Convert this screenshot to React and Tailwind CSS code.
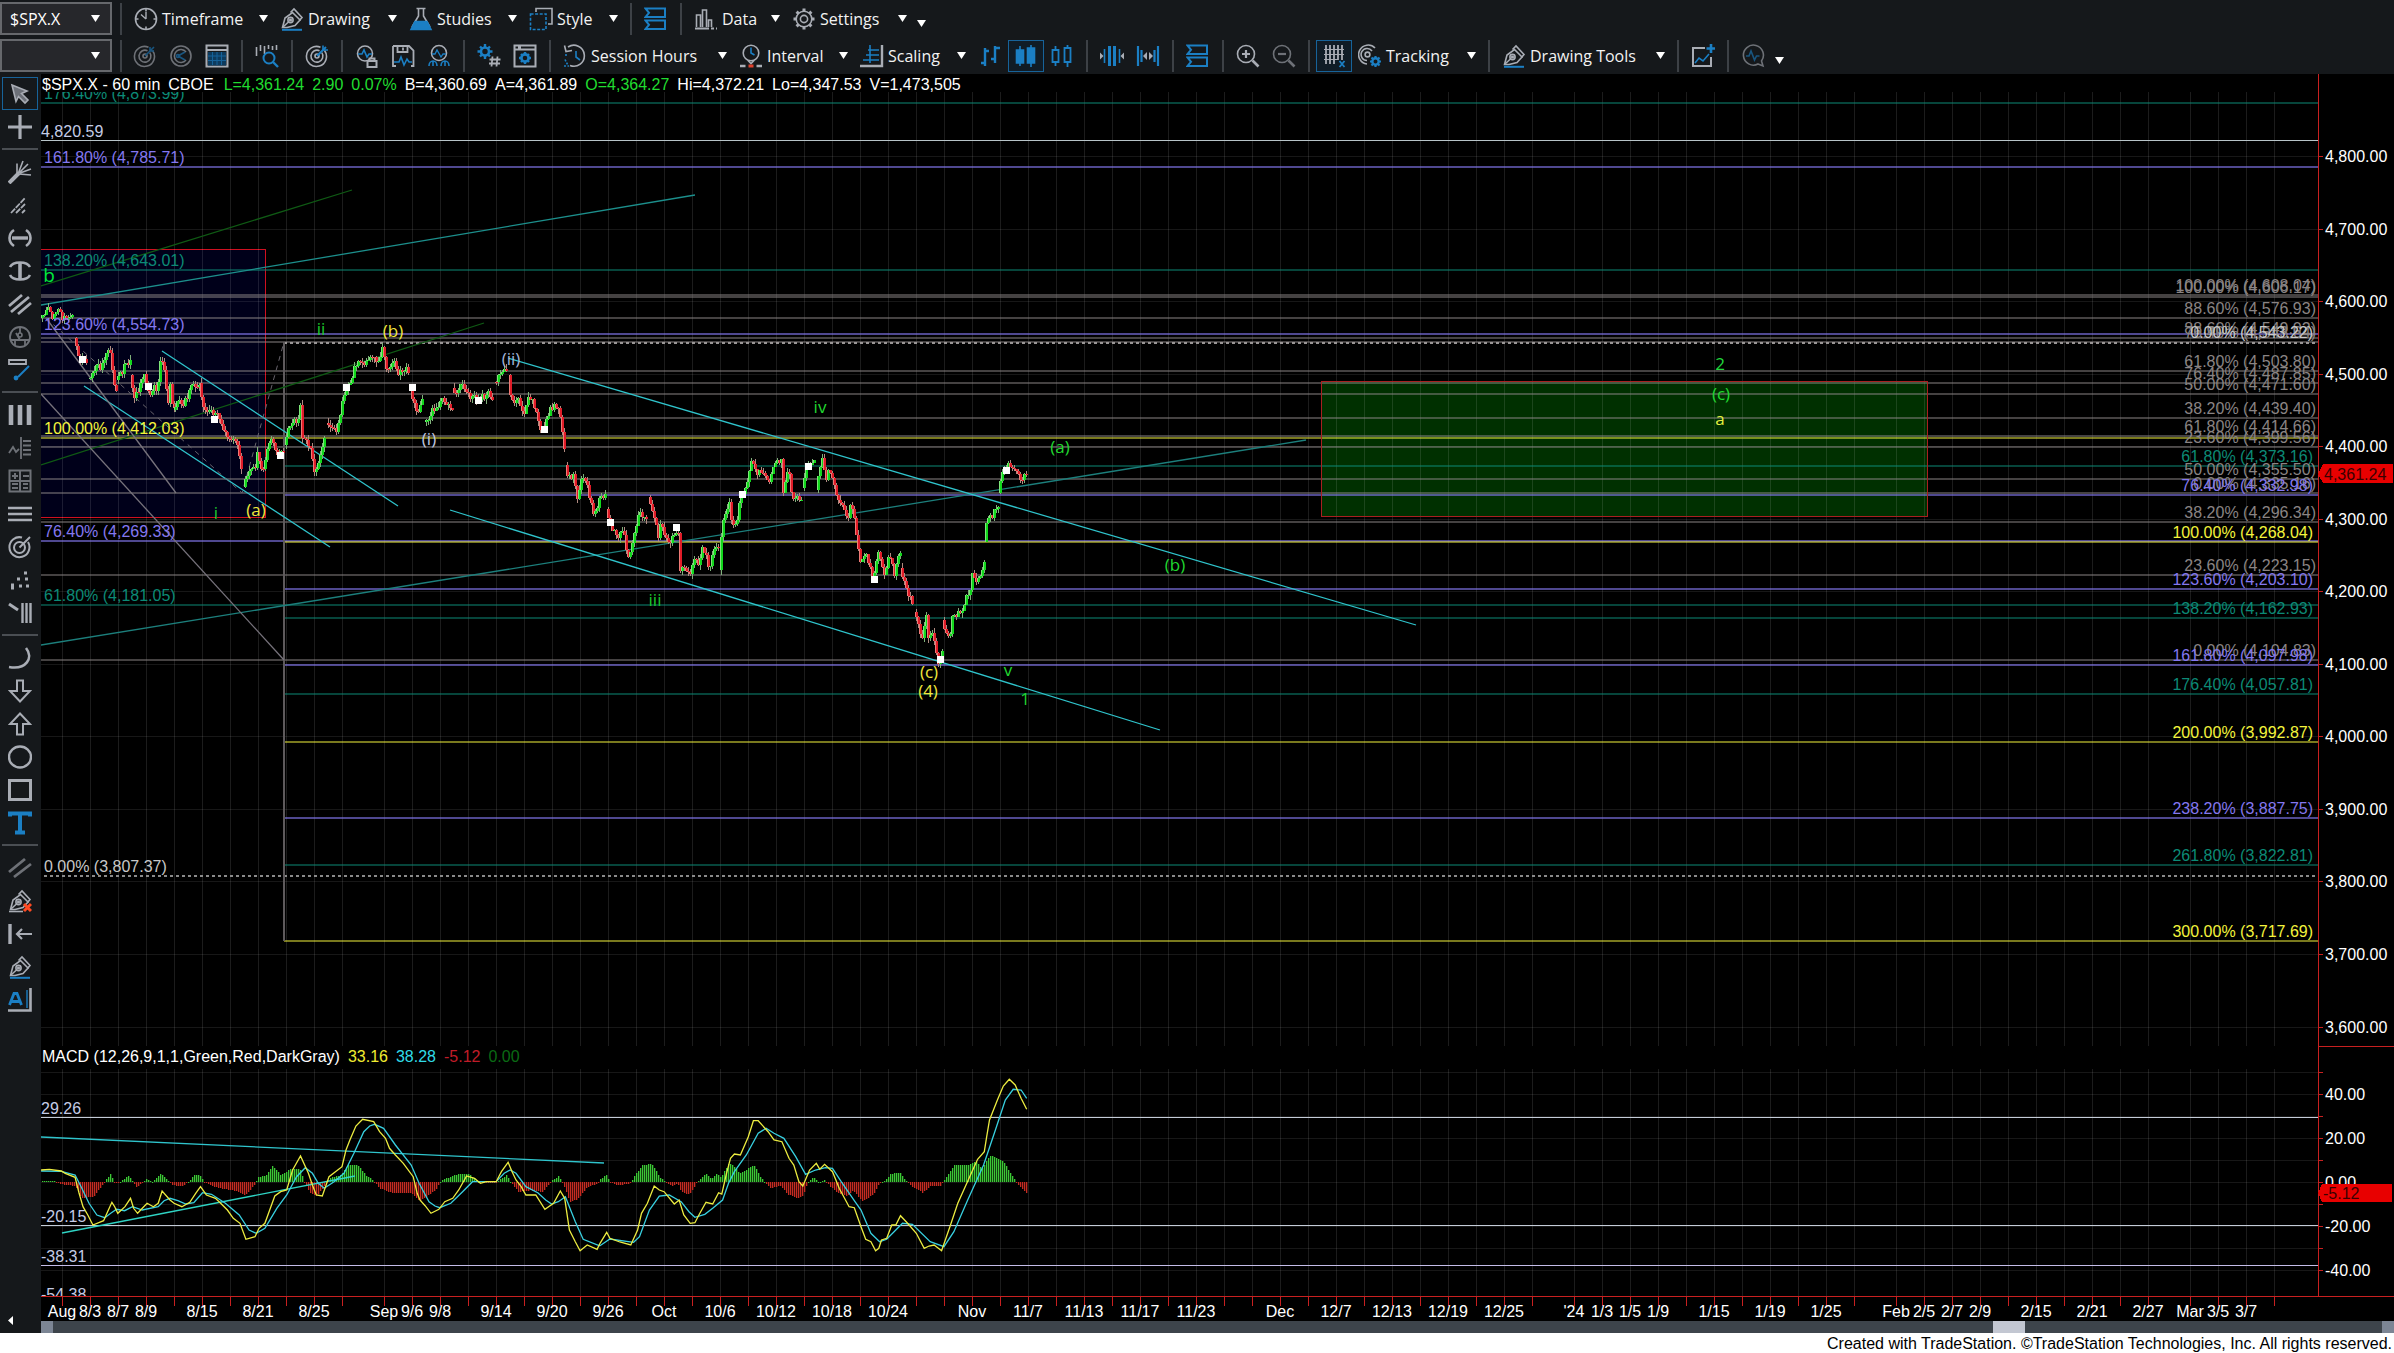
import React from "react";

/* ---------- shared colours ---------- */
const G = "#a9adb5";
const B = "#1b7fc4";

/* ---------- icons ---------- */
function Ico({ children, dim }) {
  return (
    <svg
      viewBox="0 0 24 24"
      className={dim ? "h-6 w-6 shrink-0 opacity-60" : "h-6 w-6 shrink-0"}
      fill="none"
      stroke={G}
      strokeWidth="1.6"
      aria-hidden="true"
    >
      {children}
    </svg>
  );
}

const gearPath =
  "M12 4.5v-3M12 22.5v-3M4.5 12h-3M22.5 12h-3M6.7 6.7L4.6 4.6M19.4 19.4l-2.1-2.1M6.7 17.3l-2.1 2.1M19.4 4.6l-2.1 2.1";

const pen = (
  <>
    <path d="M2.500 20.500L5 11l7.500-5.500L20 13l-5 5.500-8 2z" />
    <path d="M10.500 5.500L14 2l8 8.500-2.500 3" />
    <path d="M3 20l6-5.500" />
    <circle cx="10.500" cy="13" r="2.600" />
    <circle cx="10.500" cy="13" r=".8" fill={G} />
  </>
);

const targetRings = (
  <>
    <path d="M19.500 6.500A10 10 0 1 1 15.500 3.300" />
    <path d="M16.800 8.600A6 6 0 1 1 14.500 6.700" />
    <circle cx="12" cy="12" r="2" />
  </>
);

const I = {
  clock: (
    <Ico>
      <circle cx="12" cy="12" r="10.500" />
      <path d="M12 12V5M12 12L7 7.500" strokeWidth="1.400" />
      <path d="M12 1.500v3M12 19.500v3M1.500 12h3M19.500 12h3" />
    </Ico>
  ),
  pen: (
    <Ico>
      {pen}
      <path d="M2 22.800h20" stroke={B} strokeWidth="2" />
    </Ico>
  ),
  flask: (
    <Ico>
      <path d="M7.500 1.500h9M9.500 2v7L3 20M14.500 2v7L21 20" />
      <path d="M6 14.500h12l4 8H2z" fill={B} stroke={B} />
    </Ico>
  ),
  style: (
    <Ico>
      <path d="M7 5V1.500h16V17h-4" />
      <path d="M1.500 7h15.500v15.500H1.500z" stroke={B} strokeDasharray="3 1.600" />
    </Ico>
  ),
  stack: (
    <Ico>
      <path d="M1.500 1.500H21v8.500H1.500l3.500-4.200zM1.500 13.500H21V22H1.500l3.500-4.200z" stroke={B} strokeWidth="2" />
    </Ico>
  ),
  data: (
    <Ico>
      <path d="M2.500 20V8h4v12M8.500 20V3h4v17M14.500 20v-7h3v7" />
      <path d="M1 21.500h22" strokeDasharray="14 2 3 2" strokeWidth="2" />
    </Ico>
  ),
  gear: (
    <Ico>
      <circle cx="12" cy="12" r="7.800" />
      <circle cx="12" cy="12" r="3.600" />
      <path d={gearPath} strokeWidth="3" />
    </Ico>
  ),
  radar: (
    <Ico dim>
      {targetRings}
      <path d="M12 12L21 3M17 3v4h4" stroke={B} />
    </Ico>
  ),
  radarShare: (
    <Ico dim>
      <circle cx="12" cy="12" r="10" />
      <path d="M17 8a6.500 6.500 0 1 0 0 8" />
      <path d="M9 12l7-4M9 12l7 4" stroke={B} />
      <circle cx="9" cy="12" r="1.500" stroke={B} />
    </Ico>
  ),
  table: (
    <Ico>
      <path d="M1.500 1.500h21v21h-21z" strokeWidth="2" />
      <path d="M1.500 6h21" strokeWidth="2" />
      <path d="M3 8h18v13.500H3z" fill="#0d3b5e" stroke="none" />
      <path d="M3 12h18M3 16.500h18M7.500 8v13M12 8v13M16.500 8v13" stroke="#16639a" strokeWidth="1" />
    </Ico>
  ),
  barSearch: (
    <Ico>
      <path d="M1.500 3v9M5.500 1v6M9.500 2v8M13.500 1v4M17.500 2v4M21.500 1v5" />
      <circle cx="14" cy="14" r="5.500" stroke={B} strokeWidth="2" />
      <path d="M18 18l5 5" stroke={B} strokeWidth="2.400" />
    </Ico>
  ),
  target: (
    <Ico>
      {targetRings}
      <path d="M12 12l9-9" stroke={B} strokeWidth="2" />
      <path d="M18 1.500v4.500h5" stroke={B} />
    </Ico>
  ),
  pulseLock: (
    <Ico>
      <circle cx="10" cy="9.500" r="7.500" />
      <path d="M3 10h4l2-4 3 7 2-3h3" stroke={B} />
      <path d="M12.500 17h9v6h-9zM14.500 17v-2.500h5V17" fill="#15181b" strokeWidth="2" />
    </Ico>
  ),
  saveChart: (
    <Ico>
      <path d="M2 2h16l4.500 4.500V22H20M2 2v20h3M6.500 2v6h10V2M12 3.500v3" strokeWidth="1.800" />
      <path d="M3 18h5l2-5 3 8 3-6 2 3h3" stroke={B} />
    </Ico>
  ),
  people: (
    <Ico>
      <circle cx="12" cy="9" r="7.500" />
      <path d="M5 10h3l2-4 4 7 2-3h3" stroke={B} strokeWidth="1.300" />
      <path d="M6 17v5M18 17v5M2 22c0-3 2-5 4-5s4 2 4 5M14 22c0-3 2-5 4-5s4 2 4 5" stroke={B} />
    </Ico>
  ),
  gearHash: (
    <Ico>
      <circle cx="8" cy="7.500" r="4" stroke={B} strokeWidth="2.600" />
      <path d="M8 0v3M8 12v3M.5 7.500h3M12.500 7.500h3M3 2.500l2 2M11 10.500l2 2M3 12.500l2-2M11 4.500l2-2" stroke={B} strokeWidth="2.400" />
      <path d="M15.500 12.500l-1 10M20.500 12.500l-1 10M12.500 15.500h11M12 19.500h11" strokeWidth="1.800" />
    </Ico>
  ),
  windowGear: (
    <Ico>
      <path d="M1.500 1.500h21v21h-21zM1.500 5.500h21M5 3.500h3" strokeWidth="2" />
      <circle cx="12" cy="14" r="3.600" stroke={B} strokeWidth="2.600" />
      <path d="M12 8v2M12 18v2M6 14h2M16 14h2M8 10l1.500 1.500M14.500 16.500L16 18M8 18l1.500-1.500M14.500 11.500L16 10" stroke={B} strokeWidth="2.400" />
    </Ico>
  ),
  history: (
    <Ico>
      <path d="M5 3a10.500 10.500 0 1 1 2 18.500" />
      <path d="M1.500 1.500L3 7.500l6-1" />
      <path d="M13 7v6l4 3" stroke={B} />
      <path d="M3 10v3M2 15.500l2.500 5M1 22h5" stroke={B} strokeDasharray="2 1.500" />
    </Ico>
  ),
  interval: (
    <Ico>
      <circle cx="12" cy="9" r="7.800" />
      <path d="M12 3.500V9l3.500 2" stroke={B} />
      <path d="M9 16.500l3 3 3-3" />
      <path d="M1 22h5.500M17.500 22H23" strokeWidth="2.600" />
      <path d="M9.500 22h5" stroke="#e0402c" strokeWidth="3" />
    </Ico>
  ),
  scaling: (
    <Ico>
      <path d="M8 6h11M6 11h13M3 16h16M10 1v18" stroke={B} />
      <path d="M0 22h22V1" strokeWidth="2.400" />
    </Ico>
  ),
  bars: (
    <Ico>
      <path d="M7 4v18M3 19h4M7 7h4M17 2v17M13 15h4M17 4h5" stroke={B} strokeWidth="2.400" />
    </Ico>
  ),
  candles: (
    <Ico>
      <path d="M6 2v20M17 1v22" stroke={B} />
      <path d="M2.500 6h7v13h-7zM13.500 4h7v15h-7z" fill={B} stroke={B} />
    </Ico>
  ),
  hollowCandles: (
    <Ico>
      <path d="M5.500 2v4M5.500 18v4M17.500 1v3M17.500 18v5M2.500 6h6v12h-6zM14.500 4h6v14h-6z" stroke={B} strokeWidth="1.800" />
    </Ico>
  ),
  squeeze: (
    <Ico>
      <path d="M9.500 2v20M14.500 2v20" stroke={B} strokeWidth="3" />
      <path d="M4.500 5v14M19.500 5v14" stroke={B} />
      <path d="M0 8.500L3.500 12 0 15.500zM24 8.500L20.500 12l3.500 3.500z" fill={G} stroke="none" />
    </Ico>
  ),
  spread: (
    <Ico>
      <path d="M2 2v20M22 2v20M5.500 6v12M18.500 6v12" stroke={B} strokeWidth="2.200" />
      <path d="M11 8l-4 4 4 4zM13 8l4 4-4 4z" fill={G} stroke="none" />
    </Ico>
  ),
  zoomIn: (
    <Ico>
      <circle cx="10" cy="10" r="8.500" />
      <path d="M10 6v8M6 10h8" strokeWidth="2.200" />
      <path d="M16.500 16.500l6 6" strokeWidth="2.600" />
    </Ico>
  ),
  zoomOut: (
    <Ico dim>
      <circle cx="10" cy="10" r="8.500" />
      <path d="M6 10h8" strokeWidth="2.200" />
      <path d="M16.500 16.500l6 6" strokeWidth="2.600" />
    </Ico>
  ),
  grid: (
    <Ico>
      <path d="M4 1v19M8 1v19M12 1v19M16 1v15M20 1v15" strokeWidth="1.800" />
      <path d="M2 5.500h20M2 10.500h20M2 15.500h14" strokeWidth="1.200" />
      <path d="M17.500 17l5 6M22.500 17l-5 6" stroke={B} strokeWidth="1.800" />
    </Ico>
  ),
  tracking: (
    <Ico>
      <path d="M17 4A9.500 9.500 0 1 0 9 20M14 7a6 6 0 1 0-5 9.500" />
      <circle cx="9.500" cy="10.500" r="2.400" />
      <circle cx="17.500" cy="17.500" r="3.200" stroke={B} strokeWidth="2.400" />
      <path d="M17.500 12v2M17.500 21v2M12 17.500h2M21 17.500h2M13.500 13.500l1.500 1.500M20 20l1.500 1.500M13.500 21.500L15 20M20 15l1.500-1.500" stroke={B} strokeWidth="2.200" />
    </Ico>
  ),
  addChart: (
    <Ico>
      <path d="M14 4H2v18h18v-9" strokeWidth="2" />
      <path d="M4 19l4-5 4 3 6-7" stroke={B} />
      <path d="M20 0v9M15.500 4.500h9" stroke={B} strokeWidth="2.600" />
    </Ico>
  ),
  chat: (
    <Ico dim>
      <path d="M17 20l5 2-1.500-5A10 10 0 1 0 17 20z" />
      <path d="M5 12h3l2-5 3.500 9 2-4h3" stroke={B} />
    </Ico>
  ),
};

const R = {
  pointer: (
    <Ico>
      <path d="M4 3l15 6-5.500 2.500L20 18l-3 3-6.500-6.500L8 19.500z" fill="#6c7078" />
    </Ico>
  ),
  cross: (
    <Ico>
      <path d="M12 0v24M0 12h24" strokeWidth="3.200" />
    </Ico>
  ),
  fan: (
    <Ico>
      <path d="M1 23L11 13" strokeWidth="4" />
      <path d="M9 15V3.500M10 14L15 1M11 13l9-9M12 13l11-4M11 14l12 1" strokeWidth="1.600" />
    </Ico>
  ),
  speed: (
    <Ico>
      <path d="M3 20L17 5M8 20L17 11M14 20l3-3" strokeWidth="1.800" strokeDasharray="6 1" />
    </Ico>
  ),
  hArrow: (
    <Ico>
      <path d="M4 12h16" strokeWidth="3.400" />
      <path d="M6 4c-6 4-6 12 0 16M18 4c6 4 6 12 0 16" strokeWidth="2.600" />
    </Ico>
  ),
  vArrow: (
    <Ico>
      <path d="M12 3v18" strokeWidth="3.600" />
      <path d="M2 8c3-6 17-6 20 0M2 16c3 6 17 6 20 0" strokeWidth="2.600" />
    </Ico>
  ),
  parallels: (
    <Ico>
      <path d="M1 14L14 3M3 20L21 5M10 22l13-11" strokeWidth="2.800" />
    </Ico>
  ),
  compass: (
    <Ico dim>
      <circle cx="12" cy="12" r="10" strokeWidth="1.800" />
      <path d="M12 2v6M2 15h20M7 20v-5M17 20v-5M12 15l-4-7" strokeWidth="1.800" />
      <circle cx="12" cy="10" r="2" />
    </Ico>
  ),
  ruler: (
    <Ico>
      <path d="M1 2h17v4H1z" strokeWidth="1.800" />
      <path d="M21 8l-11 11" stroke={B} strokeWidth="2" />
      <circle cx="8" cy="20" r="2.400" fill={B} stroke="none" />
    </Ico>
  ),
  vBars: (
    <Ico>
      <path d="M3 2v20M12 2v20M21 2v20" strokeWidth="4.600" />
    </Ico>
  ),
  pattern: (
    <Ico dim>
      <path d="M13 1v22M15 5h8M15 9.500h8M15 14h8M15 18.500h8M1 17l4-6 3 5 3-3" strokeWidth="1.800" />
    </Ico>
  ),
  calc: (
    <Ico dim>
      <path d="M1.500 1.500h21v21h-21zM12 1.500v21M1.500 12h21M4 7h6M7 4v6M15 7h6M4 15h6M4 19h6M15 15h5M15 19h5" strokeWidth="2" />
    </Ico>
  ),
  hLines: (
    <Ico>
      <path d="M0 6h24M0 12h24M0 18h24" strokeWidth="2.600" />
    </Ico>
  ),
  dial: (
    <Ico>
      <path d="M20 7A10 10 0 1 1 14 2.500" strokeWidth="2" />
      <circle cx="11.500" cy="12.500" r="5.500" strokeWidth="2" />
      <path d="M11.500 12.500L22 2" strokeWidth="2" />
    </Ico>
  ),
  dots: (
    <Ico>
      <path d="M16 5h3M9 11h3M17 11h3M3 17h3M11 18h3M18 18h3M3 20h3" strokeWidth="3" />
    </Ico>
  ),
  barsPen: (
    <Ico>
      <path d="M1 3l9 6" strokeWidth="3" />
      <path d="M14.500 2v20M18.500 2v20M22.500 2v20" strokeWidth="2.400" />
    </Ico>
  ),
  arc: (
    <Ico>
      <path d="M18 2c8 10 0 22-17 19" strokeWidth="2.600" />
    </Ico>
  ),
  down: (
    <Ico>
      <path d="M9 1.500h6V12h7L12 22.500 2 12h7z" strokeWidth="2" />
    </Ico>
  ),
  up: (
    <Ico>
      <path d="M9 22.500h6V12h7L12 1.500 2 12h7z" strokeWidth="2" />
    </Ico>
  ),
  ellipse: (
    <Ico>
      <ellipse cx="12" cy="12" rx="11" ry="10.500" strokeWidth="2.400" />
    </Ico>
  ),
  rect: (
    <Ico>
      <path d="M1.500 2.500h21v19h-21z" strokeWidth="3" />
    </Ico>
  ),
  text: (
    <Ico>
      <path d="M2 5.500V2.500h20v3M12 2.500v19M7 21.500h10" stroke={B} strokeWidth="4" />
    </Ico>
  ),
  channel: (
    <Ico dim>
      <path d="M1 16L17 3M6 21L23 8" strokeWidth="2.800" />
    </Ico>
  ),
  penDelete: (
    <Ico>
      {pen}
      <path d="M1 22.500h14" />
      <path d="M16 15l7 7M23 15l-7 7" stroke="#ff4a22" strokeWidth="3" />
    </Ico>
  ),
  toLeft: (
    <Ico>
      <path d="M2 2v20" strokeWidth="3.400" />
      <path d="M24 12H9M14 7l-5 5 5 5" strokeWidth="2.200" />
    </Ico>
  ),
  textRight: (
    <Ico>
      <path d="M1.500 17L6 5.500h3L13.500 17M3.500 13.500h8" stroke={B} strokeWidth="2.800" />
      <path d="M19 2v18" stroke={B} strokeWidth="1.400" />
      <path d="M0 22.500h22.500V0" strokeWidth="2.600" />
    </Ico>
  ),
};

/* ---------- toolbar ---------- */
const Caret = () => (
  <svg viewBox="0 0 9 7" className="h-[7px] w-[9px] shrink-0" aria-hidden="true">
    <path d="M0 0h9L4.500 7z" fill="#fff" />
  </svg>
);
const Sep = () => <span className="h-8 w-[2px] shrink-0 bg-[#3d4146]" />;

function Menu({ icon, label, width }) {
  return (
    <button type="button" className={`flex h-8 shrink-0 items-center gap-1 whitespace-nowrap ${width}`}>
      {icon}
      <span>{label}</span>
      <span className="ml-auto">
        <Caret />
      </span>
    </button>
  );
}
function Tool({ icon, label, active }) {
  return (
    <button
      type="button"
      aria-label={label}
      className={
        active
          ? "-mx-1.5 flex h-8 w-9 shrink-0 items-center justify-center border border-[#17639a] bg-[#101c26]"
          : "flex h-8 w-6 shrink-0 items-center justify-center"
      }
    >
      {icon}
    </button>
  );
}
function Combo({ label, value }) {
  return (
    <div className="relative mr-2 h-[33px] w-28 shrink-0">
      <select
        aria-label={label}
        defaultValue={value}
        className="h-full w-full appearance-none border-2 border-[#66686c] bg-[#26272b] pl-2 text-base text-white"
      >
        <option>{value}</option>
      </select>
      <span className="pointer-events-none absolute top-0 right-3 flex h-full items-center">
        <Caret />
      </span>
    </div>
  );
}
const More = () => (
  <button type="button" aria-label="More" className="-ml-0.5 flex h-8 items-end pb-2">
    <Caret />
  </button>
);

function Toolbar() {
  return (
    <header className="flex flex-col overflow-hidden bg-[#15181b] text-base text-[#f2f2f2]">
      <div className="flex h-[37px] items-center">
        <Combo label="Symbol" value="$SPX.X" />
        <Sep />
        <div className="ml-3 flex items-center gap-3">
          <Menu icon={I.clock} label="Timeframe" width="w-[134px]" />
          <Menu icon={I.pen} label="Drawing" width="w-[117px]" />
          <Menu icon={I.flask} label="Studies" width="w-[108px]" />
          <Menu icon={I.style} label="Style" width="w-[89px]" />
          <Sep />
          <Tool icon={I.stack} label="Arrange" />
          <Sep />
          <Menu icon={I.data} label="Data" width="w-[86px]" />
          <Menu icon={I.gear} label="Settings" width="w-[115px]" />
          <More />
        </div>
      </div>
      <div className="flex h-[37px] items-center">
        <Combo label="Search" value="" />
        <Sep />
        <div className="ml-[11px] flex items-center gap-3">
          <Tool icon={I.radar} label="Radar" />
          <Tool icon={I.radarShare} label="Share radar" />
          <Tool icon={I.table} label="Data window" />
          <Sep />
          <Tool icon={I.barSearch} label="Find bar" />
          <Sep />
          <Tool icon={I.target} label="Scanner" />
          <Sep />
          <Tool icon={I.pulseLock} label="Lock analysis" />
          <Tool icon={I.saveChart} label="Save chart" />
          <Tool icon={I.people} label="Share analysis" />
          <Sep />
          <Tool icon={I.gearHash} label="Format symbol" />
          <Tool icon={I.windowGear} label="Format window" />
          <Sep />
          <Menu icon={I.history} label="Session Hours" width="w-[164px]" />
          <Menu icon={I.interval} label="Interval" width="w-[109px]" />
          <Menu icon={I.scaling} label="Scaling" width="w-[106px]" />
          <Tool icon={I.bars} label="Bars" />
          <Tool icon={I.candles} label="Candlesticks" active />
          <Tool icon={I.hollowCandles} label="Hollow candlesticks" />
          <Sep />
          <Tool icon={I.squeeze} label="Decrease bar spacing" />
          <Tool icon={I.spread} label="Increase bar spacing" />
          <Sep />
          <Tool icon={I.stack} label="Panes" />
          <Sep />
          <Tool icon={I.zoomIn} label="Zoom in" />
          <Tool icon={I.zoomOut} label="Zoom out" />
          <Sep />
          <Tool icon={I.grid} label="Grid" active />
          <Menu icon={I.tracking} label="Tracking" width="w-[118px]" />
          <Sep />
          <Menu icon={I.pen} label="Drawing Tools" width="w-[163px]" />
          <Sep />
          <Tool icon={I.addChart} label="Add chart" />
          <Sep />
          <Tool icon={I.chat} label="Comments" />
          <More />
        </div>
      </div>
    </header>
  );
}

/* ---------- drawing rail ---------- */
const RAIL = [
  ["Pointer", R.pointer, true],
  ["Crosshair", R.cross],
  null,
  ["Fan", R.fan],
  ["Speed lines", R.speed],
  ["Time extension", R.hArrow],
  ["Price extension", R.vArrow],
  ["Parallel lines", R.parallels],
  ["Gann fan", R.compass],
  ["Measure", R.ruler],
  null,
  ["Vertical line", R.vBars],
  ["Pattern", R.pattern],
  ["Calculator", R.calc],
  ["Horizontal line", R.hLines],
  ["Arcs", R.dial],
  ["Points", R.dots],
  ["Time zones", R.barsPen],
  null,
  ["Arc", R.arc],
  ["Down arrow", R.down],
  ["Up arrow", R.up],
  ["Ellipse", R.ellipse],
  ["Rectangle", R.rect],
  ["Text", R.text],
  null,
  ["Channel", R.channel],
  ["Delete drawings", R.penDelete],
  ["Snap left", R.toLeft],
  ["Format drawing", I.pen],
  ["Text align", R.textRight],
];

function Rail() {
  return (
    <nav aria-label="Drawing tools" className="flex w-[41px] shrink-0 flex-col bg-[#15181b] pt-[3px] pr-px">
      {RAIL.map((r, i) =>
        r ? (
          <button
            key={i}
            type="button"
            aria-label={r[0]}
            className={
              r[2]
                ? "mx-0.5 flex h-[33px] items-center justify-center border border-[#17639a]"
                : "flex h-[33px] items-center justify-center"
            }
          >
            {r[1]}
          </button>
        ) : (
          <div key={i} className="flex h-3 items-center px-0.5">
            <span className="h-[2px] w-full bg-[#4a4e53]" />
          </div>
        )
      )}
      <button type="button" aria-label="Collapse" className="mt-auto mb-2 ml-2 w-3">
        <svg viewBox="0 0 6 9" className="h-[9px] w-[6px]" aria-hidden="true">
          <path d="M5 0v9L0 4.500z" fill="#fff" />
        </svg>
      </button>
    </nav>
  );
}

/* ---------- chart geometry ---------- */
const X0 = 41;
const PRICE_TOP = 92;
const MACD_TOP = 1069;
const AXIS_TOP = 74;

const priceY = (p) => Math.round(301.3 + (4600 - p) * 0.7252);
const macdY = (v) => Math.round(1182 - v * 2.2);

const range = (from, to, step) => {
  const out = [];
  for (let v = from; v <= to; v += step) out.push(v);
  return out;
};
const GRID_X = [
  ...range(62, 342, 28),
  ...range(384, 1532, 28),
  ...range(1574, 1854, 28),
  ...range(1896, 2148, 28),
  ...range(2190, 2274, 28),
];

const C = {
  gray: "#8a8484",
  silver: "#c8c8c8",
  purple: "#8478f0",
  teal: "#0c8a76",
  yellow: "#f4f43c",
  pale: "#c4cce6",
};

/* price, percent, colour, first x, side of the label */
const LEVELS = [
  [4873.99, "176.40", "teal", 41, "L"],
  [4785.71, "161.80", "purple", 41, "L"],
  [4643.01, "138.20", "teal", 41, "L"],
  [4608.04, "100.00", "gray", 41, "R"],
  [4606.17, "100.00", "gray", 41, "R"],
  [4576.93, "88.60", "gray", 41, "R"],
  [4554.73, "123.60", "purple", 41, "L"],
  [4549.02, "88.60", "gray", 41, "R"],
  [4543.64, "76.40", "gray", 41, "R"],
  [4503.8, "61.80", "gray", 41, "R"],
  [4487.85, "76.40", "gray", 41, "R"],
  [4471.6, "50.00", "gray", 41, "R"],
  [4439.4, "38.20", "gray", 41, "R"],
  [4414.66, "61.80", "gray", 41, "R"],
  [4412.03, "100.00", "yellow", 41, "L"],
  [4399.56, "23.60", "gray", 41, "R"],
  [4373.16, "61.80", "teal", 284, "R"],
  [4355.5, "50.00", "gray", 41, "R"],
  [4335.16, "0.00", "gray", 41, "R"],
  [4332.98, "76.40", "purple", 284, "R"],
  [4296.34, "38.20", "gray", 41, "R"],
  [4269.33, "76.40", "purple", 41, "L"],
  [4268.04, "100.00", "yellow", 284, "R"],
  [4223.15, "23.60", "gray", 41, "R"],
  [4203.1, "123.60", "purple", 284, "R"],
  [4181.05, "61.80", "teal", 41, "L"],
  [4162.93, "138.20", "teal", 284, "R"],
  [4104.83, "0.00", "gray", 41, "R"],
  [4097.98, "161.80", "purple", 284, "R"],
  [4057.81, "176.40", "teal", 284, "R"],
  [3992.87, "200.00", "yellow", 284, "R"],
  [3887.75, "238.20", "purple", 284, "R"],
  [3822.81, "261.80", "teal", 284, "R"],
  [3717.69, "300.00", "yellow", 284, "R"],
];
const LINE_OPACITY = { gray: 0.5, purple: 0.6, teal: 0.5, yellow: 0.5 };
const money = (v) => v.toLocaleString("en-US", { minimumFractionDigits: 2, maximumFractionDigits: 2 });

const TRENDS = [
  [41, 286, 352, 190, "#0f5a14"],
  [41, 465, 484, 323, "#0f5a14"],
  [41, 305, 695, 195, "#1c8f8c"],
  [41, 645, 1306, 440, "#1c7f7c"],
  [162, 351, 398, 506, "#2fc4cc"],
  [84, 386, 330, 547, "#2fc4cc"],
  [508, 358, 1416, 625, "#2fc4cc"],
  [450, 510, 1160, 730, "#2fc4cc"],
  [46, 318, 176, 493, "#77737c"],
  [41, 394, 284, 660, "#77737c"],
];

const WAVES = [
  ["ii", 321, 335, "#1cc82c"],
  ["(b)", 393, 337, "#f0e83c"],
  ["(i)", 429, 445, "#c0c8e0"],
  ["(ii)", 511, 365, "#a4b4d8"],
  ["i", 216, 519, "#1cc82c"],
  ["(a)", 256, 516, "#f0e83c"],
  ["iii", 655, 606, "#1cc82c"],
  ["iv", 820, 413, "#20d830"],
  ["(a)", 1060, 453, "#20d830"],
  ["(b)", 1175, 571, "#20d830"],
  ["(c)", 929, 678, "#f0e83c"],
  ["(4)", 928, 697, "#f0e83c"],
  ["v", 1008, 676, "#20d830"],
  ["1", 1025, 705, "#20d830"],
  ["2", 1720, 370, "#20d83c"],
  ["(c)", 1721, 400, "#20d830"],
  ["a", 1720, 425, "#e4f040"],
];

/* each run is a stretch of trading without an opening gap */
const RUNS = [
  [42, 318, 47, 312, 50, 310, 54, 317, 60, 310, 64, 318, 68, 319, 74, 317],
  [76, 338, 80, 358, 88, 363],
  [90, 378, 95, 372, 98, 362, 102, 372, 106, 360, 111, 346, 114, 373, 117, 391],
  [118, 380, 123, 372, 131, 360],
  [132, 375, 136, 398, 140, 390, 145, 374, 150, 390, 154, 394, 157, 380, 159, 396, 162, 358, 166, 372, 170, 403, 172, 387, 175, 408],
  [175, 410, 180, 400, 184, 405, 188, 400, 193, 387, 200, 385],
  [201, 383, 204, 407, 213, 412, 219, 416, 226, 430, 230, 440, 238, 440, 243, 468],
  [245, 487, 250, 470, 256, 470, 259, 453, 263, 472, 267, 460, 272, 438, 278, 452, 285, 455],
  [286, 445, 289, 432, 295, 418, 300, 420, 302, 407, 304, 435, 312, 448, 317, 477, 320, 460, 326, 437],
  [328, 423, 333, 425, 338, 433, 345, 397, 353, 380, 357, 363, 367, 363, 373, 352, 378, 363, 384, 350, 388, 370, 396, 363, 400, 373, 410, 370],
  [412, 387, 415, 403, 420, 412, 424, 400],
  [426, 422, 433, 412, 440, 405, 446, 400, 453, 408],
  [454, 388, 458, 395, 463, 383, 467, 387, 472, 398, 475, 392, 478, 400, 485, 397, 490, 391, 494, 400],
  [496, 382, 502, 373, 508, 369],
  [510, 375, 513, 400, 520, 400, 525, 415, 530, 400, 535, 403, 538, 413, 542, 431, 545, 429, 549, 417, 552, 407, 561, 407, 563, 420, 565, 446],
  [567, 465, 568, 477, 575, 475, 579, 497, 583, 480, 588, 482, 595, 512, 599, 505, 602, 497, 607, 494],
  [608, 509, 612, 525, 620, 538, 625, 530, 629, 553, 631, 556, 634, 540, 641, 512, 648, 520],
  [650, 497, 656, 515, 660, 535, 662, 522, 665, 532, 672, 545, 676, 532, 680, 535, 682, 568, 692, 574, 697, 553, 700, 565, 704, 545, 711, 567, 715, 553, 719, 545],
  [721, 570, 724, 520, 731, 503, 734, 527, 738, 527, 742, 500, 744, 492, 748, 489, 753, 459, 758, 475, 763, 470, 770, 482, 776, 463, 783, 462, 785, 492, 790, 468, 794, 495, 802, 500],
  [804, 488, 809, 465, 816, 463],
  [818, 490, 823, 457, 828, 478, 831, 467, 836, 488, 841, 500, 845, 508, 850, 518, 853, 500, 858, 535, 862, 562, 868, 555, 872, 570, 874, 580, 880, 552, 886, 578, 891, 553, 896, 573, 901, 555],
  [902, 568, 908, 588, 914, 602],
  [916, 612, 919, 615, 923, 640, 928, 618, 930, 638, 934, 632, 938, 655, 941, 665, 943, 652],
  [944, 620, 948, 635, 952, 633, 954, 615, 960, 613, 964, 610, 967, 598, 972, 590, 974, 575, 979, 583, 983, 572, 985, 563],
  [986, 542, 989, 517, 994, 515, 999, 507],
  [1000, 493, 1002, 478, 1006, 472, 1010, 465, 1013, 470, 1018, 472, 1023, 480, 1027, 474],
];

const noise = (n) => {
  const s = Math.sin(n * 12.9898) * 43758.5453;
  return s - Math.floor(s);
};
function sample(points, x) {
  for (let i = 2; i < points.length; i += 2) {
    if (x <= points[i]) {
      const t = (x - points[i - 2]) / (points[i] - points[i - 2]);
      return points[i - 1] + t * (points[i + 1] - points[i - 1]);
    }
  }
  return points[points.length - 1];
}
const CANDLES = RUNS.flatMap((run) => {
  const out = [];
  const end = run[run.length - 2];
  let open = run[1];
  for (let x = run[0]; x < end; x += 2) {
    const close = sample(run, x + 2) + (noise(x) - 0.5) * 7;
    const top = Math.min(open, close);
    const h = Math.max(1, Math.abs(open - close));
    out.push({
      x,
      top,
      h,
      up: close < open,
      hi: top - noise(x + 7) * 5,
      lo: top + h + noise(x + 13) * 5,
    });
    open = close;
  }
  return out;
});
const MARKS = [
  [82, 359], [148, 386], [214, 419], [280, 455], [346, 387], [412, 387], [478, 400], [544, 429],
  [610, 522], [676, 527], [742, 494], [808, 466], [874, 579], [940, 659], [1006, 470],
];

function PricePane() {
  return (
    <svg className="block h-[954px] w-full" fontSize="16" role="img" aria-label="$SPX.X 60 minute price chart">
      <g transform={`translate(${-X0} ${-PRICE_TOP})`} shapeRendering="crispEdges">
        <rect x="30" y="249" width="235" height="268" fill="#00001a" stroke="#d01020" />
        <rect x="1321" y="381" width="606" height="135" fill="#003000" />
      </g>
      <g transform={`translate(0 ${-PRICE_TOP})`} shapeRendering="crispEdges">
        {GRID_X.map((x) => (
          <line key={x} x1={x - X0 + 0.5} x2={x - X0 + 0.5} y1="92" y2="1050" stroke="#fff" strokeOpacity=".11" />
        ))}
        {range(3600, 4800, 100).map((p) => (
          <line key={p} x1="0" x2="100%" y1={priceY(p) + 0.5} y2={priceY(p) + 0.5} stroke="#fff" strokeOpacity=".09" />
        ))}
        {LEVELS.map(([p, , c, x], i) => (
          <line key={i} x1={x - X0} x2="100%" y1={priceY(p)} y2={priceY(p)} stroke={C[c]} strokeOpacity={LINE_OPACITY[c]} strokeWidth="2" />
        ))}
        <line x1="0" x2="100%" y1="140.5" y2="140.5" stroke="#b8c4c8" />
        <line x1="243" x2="100%" y1="343" y2="343" stroke="#9a9696" strokeWidth="2" strokeDasharray="3 3" />
        <line x1="3" x2="100%" y1="876" y2="876" stroke="#8a8a8a" strokeWidth="2" strokeDasharray="3 3" />
        <line x1="243" x2="243" y1="342" y2="941" stroke="#5e5a5c" strokeWidth="2" />
      </g>
      <g transform={`translate(${-X0} ${-PRICE_TOP})`}>
        <rect x="1321" y="381" width="606" height="135" fill="none" stroke="#a82020" shapeRendering="crispEdges" />
        {TRENDS.map(([x1, y1, x2, y2, c], i) => (
          <line key={i} x1={x1} y1={y1} x2={x2} y2={y2} stroke={c} strokeWidth="1.3" />
        ))}
        <path d="M46 318L242 493L284 342" fill="none" stroke="#68646c" strokeDasharray="5 5" />
        <g shapeRendering="crispEdges">
          {CANDLES.map((k, i) => (
            <g key={i}>
              <line x1={k.x + 0.5} x2={k.x + 0.5} y1={k.hi} y2={k.lo} stroke={k.up ? "#7fb07a" : "#b08a80"} />
              <rect x={k.x - 1} y={k.top} width="3" height={k.h} fill={k.up ? "#7fe67a" : "#ee7a76"} />
              <rect x={k.x} y={k.top} width="2" height={k.h} fill={k.up ? "#12d81c" : "#e01c28"} />
            </g>
          ))}
          {MARKS.map(([x, y]) => (
            <rect key={x} x={x - 3} y={y - 3} width="7" height="7" fill="#fff" />
          ))}
        </g>
      </g>
      <g transform={`translate(0 ${-PRICE_TOP})`}>
        {LEVELS.map(([p, pct, c, , side], i) =>
          side === "L" ? (
            <text key={i} x="3" y={priceY(p) - 4} fill={C[c]}>{`${pct}% (${money(p)})`}</text>
          ) : (
            <text key={i} x="100%" dx={c === "gray" ? -2 : -5} y={priceY(p) - 4} textAnchor="end" fill={C[c]}>
              {`${pct}% (${money(p)})`}
            </text>
          )
        )}
        <text x="100%" dx="-5" y="338" textAnchor="end" fill={C.silver}>0.00% (4,543.22)</text>
        <text x="3" y="872" fill={C.silver}>0.00% (3,807.37)</text>
        <text x="0" y="137" fill={C.pale}>4,820.59</text>
      </g>
      <g transform={`translate(${-X0} ${-PRICE_TOP})`} fontFamily='"Open Sans", sans-serif' fontSize="17" textAnchor="middle">
        <text x="49" y="282" fontSize="19" fill="#00e83c">b</text>
        {WAVES.map(([t, x, y, c], i) => (
          <text key={i} x={x} y={y} fill={c}>{t}</text>
        ))}
      </g>
    </svg>
  );
}

/* ---------- MACD series: x, y pairs for the two halves of the session history ---------- */
const MACD_FAST = [
  [104,390,125,388,155,393,165,400,190,412,200,460,210,500,222,525,235,555,262,542,272,515,283,487,290,500,298,520,316,500,330,475,338,505,348,520,360,505,372,490,388,500,400,490,410,453,430,480,440,490,460,500,480,487,495,460,507,440,522,465,545,475,560,492,575,510,590,535,607,550,622,598,645,590,655,565,670,550,682,510,695,468,710,455,725,450,740,390,760,348,780,400,790,435,800,465,815,468,832,410,865,380,875,330,885,300,900,258,917,238,945,245,960,275,975,295,985,325,1000,345,1020,370,1045,410,1055,460,1062,480,1075,497,1090,520,1110,508,1125,485,1145,475,1160,450,1180,408,1200,415,1215,430,1230,425,1255,425,1268,395,1285,367,1295,395,1305,420,1318,440,1330,465,1355,465,1378,508,1400,490,1417,453,1428,475,1440,570,1455,605,1467,632,1485,615,1510,628,1535,578,1568,605],
  [0,610,17,577,25,595,50,606,78,615,95,570,105,520,120,490,137,438,150,450,162,455,188,492,200,480,212,525,228,550,240,548,250,525,268,487,285,492,300,458,308,462,320,400,330,355,340,342,355,345,375,290,388,242,400,242,425,275,440,300,460,305,478,355,490,375,503,425,513,438,530,390,547,370,556,388,568,373,588,395,605,445,630,500,643,503,660,560,672,598,685,605,697,632,705,625,712,600,725,595,738,555,748,555,760,527,778,550,800,580,820,625,832,618,845,615,864,632,885,560,905,490,935,410,955,358,972,335,978,290,985,240,1005,180,1020,138,1035,118,1050,135,1065,175,1079,208],
];
const MACD_SLOW = [
  [104,393,155,394,190,405,205,440,225,490,245,525,265,533,280,520,295,508,315,512,335,500,360,510,400,500,415,482,430,475,450,482,470,492,490,488,512,458,535,463,570,490,605,525,630,570,648,580,670,565,700,505,725,465,750,410,772,383,790,400,805,430,820,445,845,425,870,400,895,340,920,275,935,258,947,253,970,265,1000,315,1040,375,1060,430,1085,485,1100,498,1112,503,1140,490,1170,455,1195,425,1255,425,1275,400,1290,390,1305,400,1330,440,1360,458,1380,480,1395,492,1412,485,1430,470,1455,545,1475,598,1515,617,1540,595,1568,602],
  [0,617,25,597,85,607,100,590,125,510,150,468,175,465,205,485,225,515,240,532,265,523,285,505,310,480,325,430,340,395,370,345,400,280,420,265,440,280,465,295,495,350,520,403,545,390,570,383,588,385,610,425,645,485,660,510,685,580,707,605,725,598,765,550,790,553,835,605,870,620,895,575,930,480,970,375,1000,270,1025,180,1045,148,1065,150,1079,175],
];
const MACD_DIFF = [
  [104,3,135,3,140,0,160,-8,190,-12,205,-48,235,-45,262,-3,278,25,288,0,300,-3,325,20,335,0,345,-17,370,10,385,0,405,25,420,8,435,-10,460,-12,475,0,490,20,505,20,515,0,540,-15,600,-28,620,-40,645,-5,652,15,670,18,688,47,710,20,735,40,758,40,770,-5,785,-35,800,-42,820,-12,832,12,860,20,880,52,905,50,925,20,942,5,960,-20,990,-32,1040,-32,1060,-58,1100,-25,1115,5,1160,25,1185,25,1210,0,1240,-3,1255,0,1280,20,1290,0,1310,-30,1340,-25,1370,-30,1390,-5,1395,5,1413,18,1425,-10,1440,-60,1460,-52,1485,-15,1508,-5,1517,5],
  [0,10,15,20,25,0,45,-10,75,-5,85,15,105,50,130,55,150,15,165,0,180,-12,195,-3,205,-30,225,-38,245,0,268,25,280,10,295,25,305,12,325,58,340,45,352,25,370,38,388,52,405,15,415,0,430,-18,455,-12,475,-38,498,-48,513,-40,525,0,540,15,552,0,568,5,580,-12,600,-32,625,-42,640,-25,662,-58,690,-38,705,-5,720,5,735,25,758,27,775,0,790,-15,815,-32,835,-12,860,-12,870,5,895,50,930,50,950,62,965,40,985,80,1000,72,1020,62,1040,20,1052,0,1065,-20,1079,-35],
];
const SX = 2.529;
const HALF_X = [0, 600];
const toPoints = (halves) =>
  halves
    .flatMap((pts, h) => {
      const out = [];
      for (let i = 0; i < pts.length; i += 2) {
        const x = HALF_X[h] + pts[i] / SX;
        if (h === 0 && x >= 600) continue;
        out.push(`${x.toFixed(1)},${(1040 + pts[i + 1] / 3).toFixed(1)}`);
      }
      return out;
    })
    .join(" ");
const HISTOGRAM = range(42, 1026, 2).map((x) => {
  const h = x < 600 ? 0 : 1;
  return { x, v: sample(MACD_DIFF[h], (x - HALF_X[h]) * SX) / 3 };
});

function MacdPane() {
  return (
    <svg className="block h-[227px] w-full" fontSize="16" role="img" aria-label="MACD indicator">
      <g transform={`translate(0 ${-MACD_TOP})`} shapeRendering="crispEdges">
        {GRID_X.map((x) => (
          <line key={x} x1={x - X0 + 0.5} x2={x - X0 + 0.5} y1="1069" y2="1296" stroke="#fff" strokeOpacity=".11" />
        ))}
        {range(-40, 50, 10).map((v) => (
          <line key={v} x1="0" x2="100%" y1={macdY(v) + 0.5} y2={macdY(v) + 0.5} stroke="#fff" strokeOpacity=".09" />
        ))}
        {[1117, 1225, 1265].map((y) => (
          <line key={y} x1="0" x2="100%" y1={y + 0.5} y2={y + 0.5} stroke={y === 1265 ? "#c4bce8" : "#c4ccd8"} />
        ))}
      </g>
      <g transform={`translate(${-X0} ${-MACD_TOP})`}>
        <g shapeRendering="crispEdges">
          {HISTOGRAM.map(({ x, v }) => (
            <rect key={x} x={x} y={v > 0 ? 1182 - v : 1182} width="1" height={Math.max(1, Math.abs(v))} fill={v > 0 ? "#3cc836" : "#c42c22"} />
          ))}
          {HISTOGRAM.map(({ x, v }) => (
            <rect key={x} x={x + 1} y={v > 0 ? 1182 - v : 1182} width="1" height={Math.max(1, Math.abs(v))} fill={v > 0 ? "#12420f" : "#400c0a"} />
          ))}
        </g>
        <line x1="41" y1="1137" x2="604" y2="1163" stroke="#2fc4cc" strokeWidth="1.3" />
        <line x1="62" y1="1233" x2="355" y2="1176" stroke="#2fd4c4" strokeWidth="1.3" />
        <polyline points={toPoints(MACD_SLOW)} fill="none" stroke="#38d0e0" strokeWidth="1.300" />
        <polyline points={toPoints(MACD_FAST)} fill="none" stroke="#ecec40" strokeWidth="1.300" />
      </g>
      <g transform={`translate(0 ${-MACD_TOP})`} fill={C.pale}>
        <text x="0" y="1114">29.26</text>
        <text x="0" y="1222">-20.15</text>
        <text x="0" y="1262">-38.31</text>
        <text x="0" y="1300">-54.38</text>
      </g>
    </svg>
  );
}

/* ---------- axes ---------- */
function ValueAxis() {
  return (
    <svg className="block h-[1222px] w-[76px] shrink-0" fontSize="16" role="img" aria-label="Value axis">
      <g transform={`translate(0 ${-AXIS_TOP})`} shapeRendering="crispEdges">
        <path d="M.5 74V1296M0 1046.500H76" stroke="#c82020" fill="none" />
        {range(3600, 4800, 100).map((p) => (
          <g key={p}>
            <path d={`M1 ${priceY(p) + 0.5}h4`} stroke="#c82020" />
            <text x="7" y={priceY(p) + 6} fill="#fff">{money(p)}</text>
          </g>
        ))}
        {range(-40, 50, 10).map((v) => (
          <path key={v} d={`M1 ${macdY(v) + 0.5}h4`} stroke="#c82020" />
        ))}
        {range(-40, 40, 20).map((v) => (
          <text key={v} x="7" y={macdY(v) + 6} fill="#fff">{money(v)}</text>
        ))}
        <path d="M0 474L5 464H75V483H5z" fill="#e80000" />
        <text x="6" y="480" fill="#3a0000">4,361.24</text>
        <path d="M0 1193L4 1184H74V1202H4z" fill="#e80000" />
        <text x="5" y="1199" fill="#3a0000">-5.12</text>
      </g>
    </svg>
  );
}

const DATES = [
  ["Aug", 62], ["8/3", 90], ["8/7", 118], ["8/9", 146], ["8/15", 202], ["8/21", 258], ["8/25", 314],
  ["Sep", 384], ["9/6", 412], ["9/8", 440], ["9/14", 496], ["9/20", 552], ["9/26", 608], ["Oct", 664],
  ["10/6", 720], ["10/12", 776], ["10/18", 832], ["10/24", 888], ["Nov", 972], ["11/7", 1028],
  ["11/13", 1084], ["11/17", 1140], ["11/23", 1196], ["Dec", 1280], ["12/7", 1336], ["12/13", 1392],
  ["12/19", 1448], ["12/25", 1504], ["'24", 1574], ["1/3", 1602], ["1/5", 1630], ["1/9", 1658],
  ["1/15", 1714], ["1/19", 1770], ["1/25", 1826], ["Feb", 1896], ["2/5", 1924], ["2/7", 1952],
  ["2/9", 1980], ["2/15", 2036], ["2/21", 2092], ["2/27", 2148], ["Mar", 2190], ["3/5", 2218], ["3/7", 2246],
];

function TimeAxis() {
  return (
    <svg className="block h-[25px] w-full" fontSize="16" role="img" aria-label="Time axis">
      <line x1="0" x2="100%" y1=".5" y2=".5" stroke="#c82020" shapeRendering="crispEdges" />
      <g transform={`translate(${-X0} 0)`}>
        {GRID_X.map((x) => (
          <line key={x} x1={x + 0.5} x2={x + 0.5} y1="0" y2="10" stroke="#c82020" shapeRendering="crispEdges" />
        ))}
        {DATES.map(([t, x]) => (
          <text key={x} x={x} y="21" textAnchor="middle" fill="#fff">{t}</text>
        ))}
      </g>
    </svg>
  );
}

export default function App() {
  return (
    <div className="flex flex-col overflow-hidden bg-black font-['Open_Sans',sans-serif]">
      <Toolbar />
      <main className="flex">
        <Rail />
        <section className="flex min-w-0 flex-1 flex-col font-['Liberation_Sans',Arial,sans-serif] text-base text-white">
          <div className="flex">
            <div className="min-w-0 flex-1">
              <div className="flex h-[18px] gap-2 overflow-hidden pl-px leading-[22px] whitespace-nowrap">
                <span>$SPX.X - 60 min</span>
                <span>CBOE</span>
                <span className="ml-0.5 text-[#20dc30]">L=4,361.24</span>
                <span className="text-[#20dc30]">2.90</span>
                <span className="text-[#20dc30]">0.07%</span>
                <span>B=4,360.69</span>
                <span>A=4,361.89</span>
                <span className="text-[#20dc30]">O=4,364.27</span>
                <span>Hi=4,372.21</span>
                <span>Lo=4,347.53</span>
                <span>V=1,473,505</span>
              </div>
              <PricePane />
              <div className="flex h-[23px] gap-2 overflow-hidden pl-px leading-[22px] whitespace-nowrap">
                <span>MACD (12,26,9,1,1,Green,Red,DarkGray)</span>
                <span className="text-[#f0ec30]">33.16</span>
                <span className="text-[#30dce8]">38.28</span>
                <span className="text-[#c01c28]">-5.12</span>
                <span className="text-[#0a6a14]">0.00</span>
              </div>
              <MacdPane />
            </div>
            <ValueAxis />
          </div>
          <TimeAxis />
          <div className="flex h-3 bg-[#3d444b]" role="scrollbar" aria-controls="chart" aria-valuenow={84} aria-orientation="horizontal">
            <button type="button" aria-label="Scroll left" className="w-3 bg-[#7c8594]" />
            <span className="flex-1" />
            <span className="w-8 bg-[#c3c7d2]" />
            <span className="w-[357px]" />
            <button type="button" aria-label="Scroll right" className="w-3 bg-[#7c8594]" />
          </div>
        </section>
      </main>
      <footer className="h-5 bg-white pr-0.5 text-right font-['Liberation_Sans',Arial,sans-serif] text-base leading-[22px] text-black">
        Created with TradeStation. ©TradeStation Technologies, Inc. All rights reserved.
      </footer>
    </div>
  );
}
